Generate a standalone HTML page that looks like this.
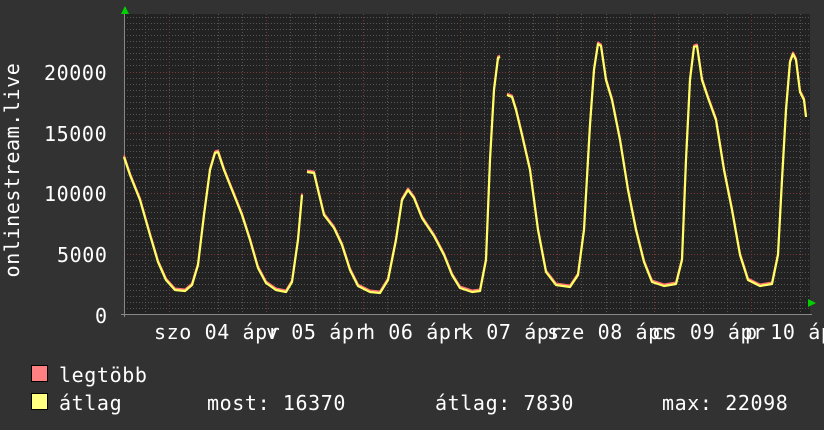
<!DOCTYPE html>
<html><head><meta charset="utf-8"><style>
html,body{margin:0;padding:0;background:#323232;width:824px;height:430px;overflow:hidden}
.t{position:absolute;font-family:"DejaVu Sans Mono","Liberation Mono",monospace;font-size:20px;letter-spacing:0.6px;color:#fff;white-space:pre;line-height:1}
</style></head><body>
<svg width="824" height="430" style="position:absolute;left:0;top:0">
<rect x="124" y="14" width="686" height="300" fill="#222"/>
<g stroke="#555" stroke-width="1" stroke-dasharray="1,2">
<path d="M124 308.5H810M124 302.5H810M124 296.5H810M124 290.5H810M124 284.5H810M124 278.5H810M124 272.5H810M124 266.5H810M124 260.5H810M124 248.5H810M124 242.5H810M124 236.5H810M124 230.5H810M124 224.5H810M124 218.5H810M124 212.5H810M124 206.5H810M124 200.5H810M124 187.5H810M124 181.5H810M124 175.5H810M124 169.5H810M124 163.5H810M124 157.5H810M124 151.5H810M124 145.5H810M124 139.5H810M124 126.5H810M124 120.5H810M124 114.5H810M124 108.5H810M124 102.5H810M124 96.5H810M124 90.5H810M124 84.5H810M124 78.5H810M124 65.5H810M124 59.5H810M124 53.5H810M124 47.5H810M124 41.5H810M124 35.5H810M124 29.5H810M124 23.5H810M124 17.5H810"/>
<path d="M145.5 14V314M193.5 14V314M218.5 14V314M242.5 14V314M290.5 14V314M315.5 14V314M339.5 14V314M387.5 14V314M412.5 14V314M436.5 14V314M484.5 14V314M509.5 14V314M533.5 14V314M581.5 14V314M606.5 14V314M630.5 14V314M678.5 14V314M703.5 14V314M727.5 14V314M775.5 14V314M800.5 14V314"/>
</g>
<g stroke="#7a3a3a" stroke-width="1" stroke-dasharray="1,2">
<path d="M124 72.5H810M124 133.5H810M124 193.5H810M124 254.5H810"/>
<path d="M169.5 14V314M266.5 14V314M363.5 14V314M460.5 14V314M557.5 14V314M654.5 14V314M751.5 14V314"/>
</g>
<path d="M121 314.5H812M124.5 14V317" stroke="#888" stroke-width="1" fill="none"/>
<path d="M121 14L125 6L129 14Z" fill="#00d000"/>
<path d="M808 299L816 303L808 307Z" fill="#00d000"/>
<g fill="none" stroke-linejoin="round">
<g stroke="#ff7070" stroke-width="2" transform="translate(0,-1.5)">
<polyline points="124,157 130,175 140,200 150,235 158,262 166,280 175,290 185,291 192,285 198,265 204,215 210,170 215,153 218,152 224,170 232,190 242,215 250,240 258,268 266,283 276,290 286,292 292,282 298,240 302,195"/>
<polyline points="307,172 314,173 318,190 324,215 334,228 342,245 350,270 358,286 370,292 380,293 388,280 396,240 402,200 408,190 414,198 422,218 434,236 444,255 452,275 460,288 472,292 480,291 486,260 490,160 494,90 498,58 500,57"/>
<polyline points="507,95 512,97 516,110 522,135 530,170 538,230 546,272 556,285 570,287 578,275 584,230 590,125 594,70 598,44 601,46 606,80 612,100 620,140 628,190 636,230 644,262 652,282 664,286 676,284 682,260 686,160 690,80 694,47 697,46 702,80 708,98 716,120 724,170 732,210 740,255 748,280 760,286 772,284 778,255 782,180 786,110 790,62 793,54 796,60 800,92 804,100 806,117"/>
</g>
<g stroke="#ffff66" stroke-width="2.2">
<polyline points="124,157 130,175 140,200 150,235 158,262 166,280 175,290 185,291 192,285 198,265 204,215 210,170 215,153 218,152 224,170 232,190 242,215 250,240 258,268 266,283 276,290 286,292 292,282 298,240 302,195"/>
<polyline points="307,172 314,173 318,190 324,215 334,228 342,245 350,270 358,286 370,292 380,293 388,280 396,240 402,200 408,190 414,198 422,218 434,236 444,255 452,275 460,288 472,292 480,291 486,260 490,160 494,90 498,58 500,57"/>
<polyline points="507,95 512,97 516,110 522,135 530,170 538,230 546,272 556,285 570,287 578,275 584,230 590,125 594,70 598,44 601,46 606,80 612,100 620,140 628,190 636,230 644,262 652,282 664,286 676,284 682,260 686,160 690,80 694,47 697,46 702,80 708,98 716,120 724,170 732,210 740,255 748,280 760,286 772,284 778,255 782,180 786,110 790,62 793,54 796,60 800,92 804,100 806,117"/>
</g>
</g>
<rect x="31.5" y="365.5" width="16" height="16" fill="#ff8080" stroke="#000"/>
<rect x="31.5" y="393.5" width="16" height="16" fill="#ffff80" stroke="#000"/>
<text x="12" y="170" transform="rotate(-90 12 170)" text-anchor="middle" dominant-baseline="central" fill="#fff" font-family="DejaVu Sans Mono, monospace" font-size="20" letter-spacing="0.6">onlinestream.live</text>
</svg>
<div class="t" style="left:44px;top:63px">20000</div>
<div class="t" style="left:44px;top:124px">15000</div>
<div class="t" style="left:44px;top:184px">10000</div>
<div class="t" style="left:57px;top:245px">5000</div>
<div class="t" style="left:95px;top:306px">0</div>
<div class="t" style="left:154px;top:322px">szo 04 ápr</div>
<div class="t" style="left:266px;top:322px">v 05 ápr</div>
<div class="t" style="left:363px;top:322px">h 06 ápr</div>
<div class="t" style="left:461px;top:322px">k 07 ápr</div>
<div class="t" style="left:547px;top:322px">sze 08 ápr</div>
<div class="t" style="left:652px;top:322px">cs 09 ápr</div>
<div class="t" style="left:745px;top:322px">p 10 ápr</div>
<div class="t" style="left:59px;top:365px">legtöbb</div>
<div class="t" style="left:59px;top:393px">átlag</div>
<div class="t" style="left:207px;top:393px">most: 16370</div>
<div class="t" style="left:435px;top:393px">átlag: 7830</div>
<div class="t" style="left:662px;top:393px">max: 22098</div>
</body></html>
